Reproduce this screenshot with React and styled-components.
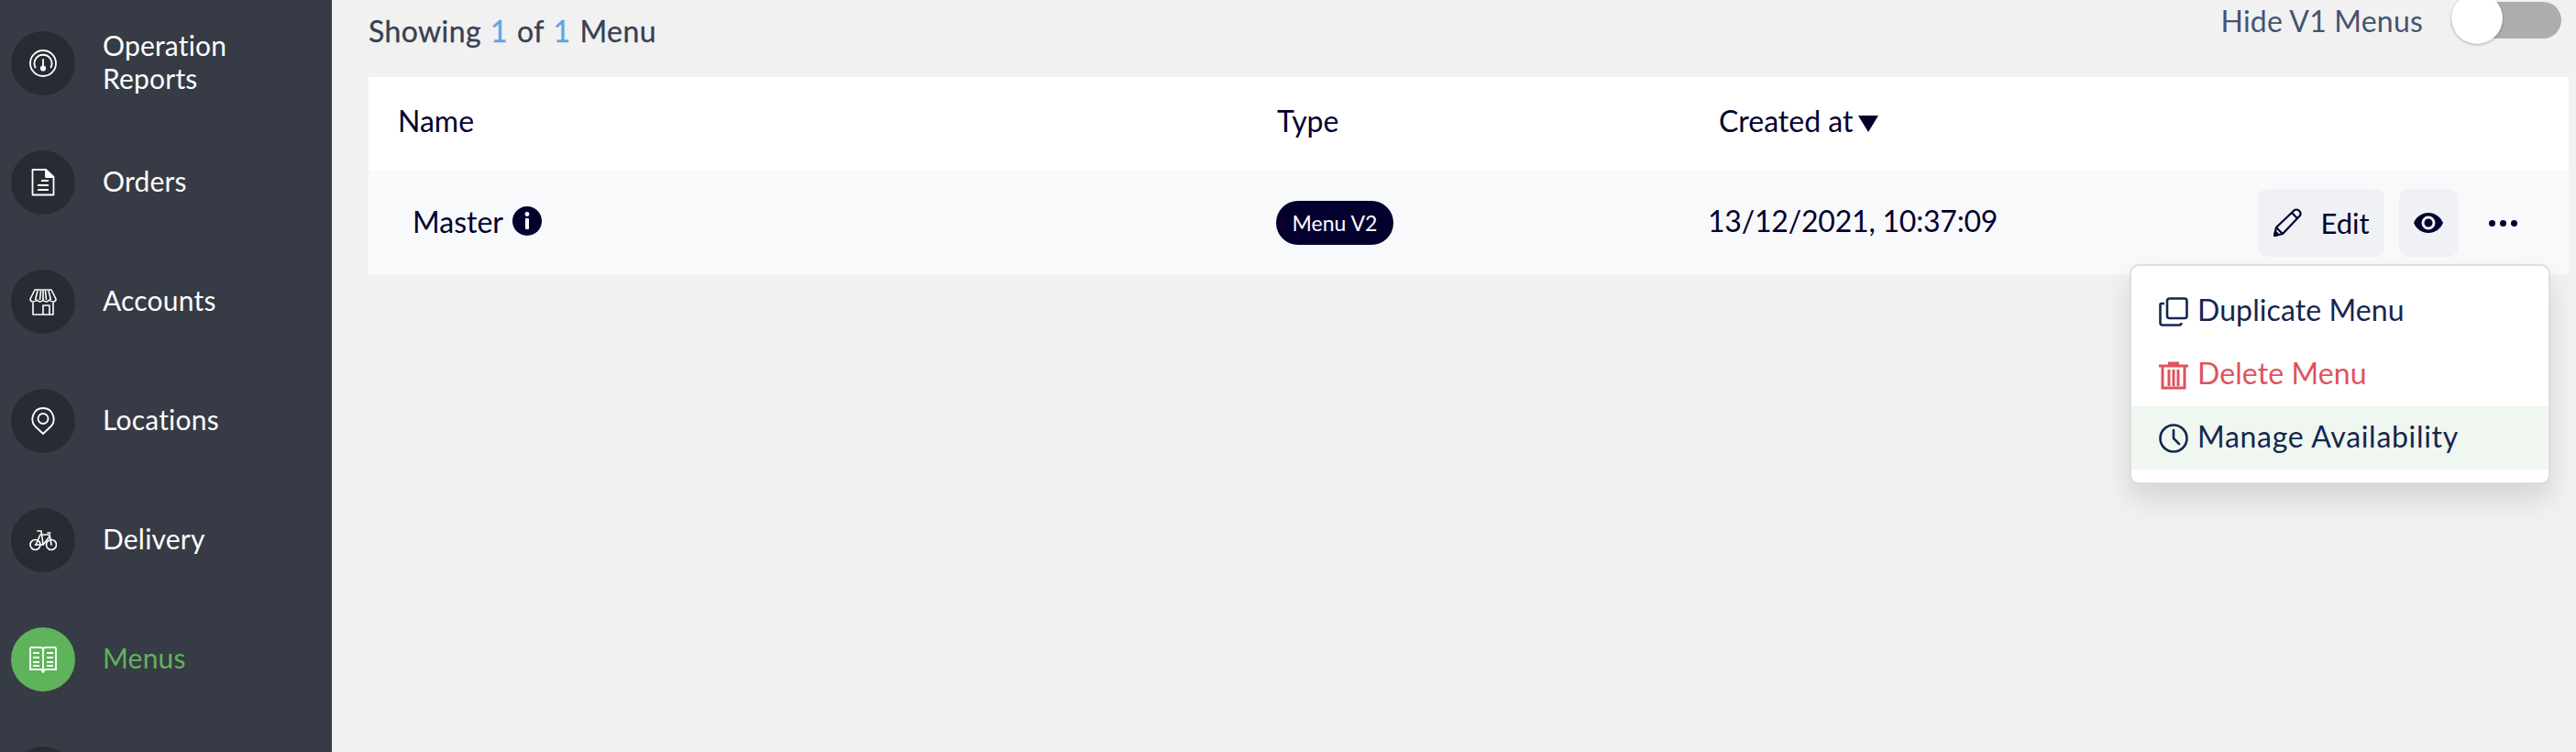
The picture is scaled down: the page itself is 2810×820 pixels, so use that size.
import React from "react";
import styled, { createGlobalStyle } from "styled-components";

const GlobalStyle = createGlobalStyle`
  html, body { margin: 0; padding: 0; height: 100%; }
  body { font-family: "Lato", "Noto Sans", sans-serif; background: #f1f1f1; overflow: hidden; }
`;

const GaugeIcon = () => (
  <svg width="30" height="30" viewBox="0 0 30 30" fill="none" stroke="#fff" strokeWidth="1.8" strokeLinecap="round">
    <circle cx="15" cy="15" r="14" />
    <path d="M6.5 19.5A9.5 9.5 0 1 1 23.5 19.5" />
    <path d="M15 11V18" />
    <circle cx="15" cy="20.5" r="2.2" fill="#fff" />
  </svg>
);

const FileIcon = () => (
  <svg width="30" height="30" viewBox="0 0 30 30" fill="none" stroke="#fff" strokeWidth="1.8" strokeLinejoin="round">
    <path d="M3.500 1H18L26.500 9V28.500H3.500Z" />
    <path d="M18 1V9H26.500" fill="#fff" />
    <path d="M13 13H21M9 18H21M9 23H21" />
  </svg>
);

const StoreIcon = () => (
  <svg width="30" height="30" viewBox="0 0 30 30" fill="none" stroke="#fff" strokeWidth="1.6" strokeLinejoin="round">
    <path d="M6 2H24L29 12Q29 15 26 15Q23 15 22 13Q20 15 18.500 15Q16 15 15 13Q14 15 11.500 15Q10 15 8 13Q7 15 4 15Q1 15 1 12Z" />
    <path d="M9 3L6.500 13M12.500 3L11.500 13M15 3V13M17.500 3L18.500 13M21 3L23.500 13" />
    <path d="M4 16V29H26V16" />
    <path d="M15 29V19H22V29" />
  </svg>
);

const PinIcon = () => (
  <svg width="30" height="30" viewBox="0 0 30 30" fill="none" stroke="#fff" strokeWidth="1.8" strokeLinejoin="round">
    <path d="M15 29L6 20.500C0.500 14 4 1 15 1C26 1 29.500 14 24 20.500Z" />
    <circle cx="15" cy="12.500" r="5.500" />
  </svg>
);

const BikeIcon = () => (
  <svg width="30" height="30" viewBox="0 0 30 30" fill="none" stroke="#fff" strokeWidth="1.6" strokeLinecap="round" strokeLinejoin="round">
    <circle cx="6.500" cy="20" r="5.500" />
    <circle cx="24" cy="20" r="5.500" />
    <path d="M7 20L12 9H22L24 20" />
    <path d="M6.500 20H15L22 11" />
    <path d="M9 5H13L15 20M20 7H23" />
  </svg>
);

const BookIcon = () => (
  <svg width="30" height="30" viewBox="0 0 30 30" fill="none" stroke="#fff" strokeWidth="1.8">
    <path d="M1 2H12Q15 2 15 5V28M29 2H18Q15 2 15 5" />
    <path d="M1 2V26H13L15 29L17 26H29V2" />
    <path d="M4 8H11M4 13H11M4 18H11M4 22H11M19 8H26M19 13H26M19 18H26M19 22H26" />
  </svg>
);

const InfoIcon = () => (
  <svg width="32" height="32" viewBox="0 0 32 32">
    <circle cx="16" cy="16" r="16" fill="#03002e" />
    <circle cx="16" cy="8.500" r="2.400" fill="#fff" />
    <rect x="14" y="13" width="4" height="12" rx="1" fill="#fff" />
  </svg>
);

const PencilIcon = () => (
  <svg width="32" height="32" viewBox="0 0 32 32" fill="none" stroke="#03002e" strokeWidth="2.200" strokeLinejoin="round">
    <path d="M2 30L4 21L24 2Q26 1 28 2L30 4Q31 6 30 8L11 28Z" />
    <path d="M21 5L27 11M4 21L11 28" />
    <path d="M2 30L3 25.500L6.500 29Z" fill="#03002e" />
  </svg>
);

const EyeIcon = () => (
  <svg width="32" height="32" viewBox="0 0 32 32">
    <path fillRule="evenodd" fill="#03002e" d="M0 16C3 9 9 5 16 5S29 9 32 16C29 23 23 27 16 27S3 23 0 16ZM16 8.500A7.500 7.500 0 1 0 16 23.500A7.500 7.500 0 1 0 16 8.500Z" />
    <circle cx="16" cy="16" r="4.500" fill="#03002e" />
  </svg>
);

const CopyIcon = ({ color }) => (
  <svg width="32" height="32" viewBox="0 0 32 32" fill="none" stroke={color} strokeWidth="2.600" strokeLinejoin="round">
    <rect x="9" y="1.500" width="21.500" height="21.500" rx="2.500" />
    <path d="M1.500 8V28Q1.500 30.500 4 30.500H22Q24.500 30.500 24.500 28" />
    <path d="M1.500 8Q1.500 7 3 7H6" />
  </svg>
);

const TrashIcon = ({ color }) => (
  <svg width="32" height="32" viewBox="0 0 32 32" fill="none" stroke={color} strokeWidth="3">
    <path d="M0 6H32" />
    <path d="M10 1.500H22V5H10Z" fill={color} stroke="none" />
    <path d="M4 6V30H28V6" />
    <path d="M11 10V28M16 10V28M21 10V28" />
  </svg>
);

const ClockIcon = ({ color }) => (
  <svg width="32" height="32" viewBox="0 0 32 32" fill="none" stroke={color} strokeWidth="2.600" strokeLinecap="round">
    <circle cx="16" cy="16" r="14.500" />
    <path d="M16 7V16L22 22" />
  </svg>
);

const Layout = styled.div`
  display: flex;
  width: 2810px;
  height: 820px;
  overflow: hidden;
`;

const Sidebar = styled.nav`
  width: 362px;
  flex-shrink: 0;
  height: 820px;
  padding-top: 4px;
  box-sizing: border-box;
  background: #363b45;
  overflow: hidden;
`;

const NavItem = styled.div`
  display: flex;
  align-items: center;
  height: 130px;
  padding-left: 12px;
  gap: 30px;
  flex-shrink: 0;
`;

const NavCircle = styled.div`
  width: 70px;
  height: 70px;
  flex-shrink: 0;
  border-radius: 50%;
  display: flex;
  align-items: center;
  justify-content: center;
  background: ${(p) => (p.$active ? "#5fb35a" : "#272b33")};
`;

const NavLabel = styled.span`
  font-size: 30px;
  line-height: 36px;
  width: 180px;
  padding-bottom: 4px;
  letter-spacing: 0.2px;
  color: ${(p) => (p.$active ? "#5fb35a" : "#ffffff")};
`;

const Main = styled.main`
  flex: 1;
  padding: 0 8px 0 40px;
  min-width: 0;
`;

const TopBar = styled.div`
  display: flex;
  align-items: flex-start;
  justify-content: space-between;
  height: 84px;
`;

const Summary = styled.div`
  font-size: 32px;
  line-height: 36px;
  margin-top: 16px;
  letter-spacing: 0.4px;
  word-spacing: 1.5px;
  color: #374151;
  -webkit-text-stroke: 0.3px #374151;
`;

const Count = styled.span`
  color: #5aa7e8;
  -webkit-text-stroke: 0.3px #5aa7e8;
`;

const ToggleWrap = styled.div`
  display: flex;
  align-items: flex-start;
  gap: 31px;
  padding-right: 8px;
`;

const ToggleLabel = styled.span`
  font-size: 32px;
  line-height: 36px;
  margin-top: 5px;
  letter-spacing: 0.2px;
  color: #445472;
`;

const ToggleTrack = styled.div`
  position: relative;
  width: 120px;
  height: 40px;
  margin-top: 2px;
  border-radius: 20px;
  background: #adadad;
`;

const ToggleKnob = styled.div`
  position: absolute;
  left: 0;
  top: -10px;
  width: 56px;
  height: 56px;
  border-radius: 50%;
  background: #fff;
  box-shadow: 0 1px 3px rgba(0, 0, 0, 0.3);
`;

const Columns = "990px 473px 1fr auto";

const HeaderRow = styled.div`
  display: grid;
  grid-template-columns: ${Columns};
  align-items: center;
  height: 102px;
  background: #fff;
`;

const HeaderCell = styled.div`
  font-size: 32px;
  color: #03002e;
  padding-left: ${(p) => p.$indent || 0}px;
  padding-bottom: 7px;
  display: flex;
  align-items: center;
  gap: 6px;
`;

const SortArrow = styled.span`
  width: 0;
  height: 0;
  margin-top: 6px;
  border-left: 11px solid transparent;
  border-right: 11px solid transparent;
  border-top: 18px solid #03002e;
`;

const BodyRow = styled.div`
  position: relative;
  display: grid;
  grid-template-columns: ${Columns};
  align-items: center;
  height: 114px;
  background: #f8f9fb;
`;

const NameCell = styled.div`
  display: flex;
  align-items: center;
  gap: 10px;
  padding-left: 48px;
  padding-bottom: 4px;
  font-size: 32px;
  color: #03002e;
`;

const TypeCell = styled.div`
  display: flex;
`;

const Badge = styled.span`
  display: flex;
  align-items: center;
  justify-content: center;
  width: 128px;
  height: 48px;
  border-radius: 24px;
  background: #03002e;
  color: #fff;
  font-size: 23px;
`;

const DateCell = styled.div`
  font-size: 32px;
  margin-left: -2px;
  padding-bottom: 6px;
  letter-spacing: -0.2px;
  color: #03002e;
`;

const Actions = styled.div`
  display: flex;
  align-items: center;
  gap: 16px;
  padding-right: 56px;
`;

const ActionButton = styled.button`
  display: flex;
  align-items: center;
  justify-content: center;
  gap: 20px;
  width: ${(p) => p.$width}px;
  height: 74px;
  padding: 0;
  border: none;
  border-radius: 10px;
  background: #f0f1f5;
  color: #03002e;
  font-family: inherit;
  font-size: 31px;
`;

const DotsButton = styled.div`
  display: flex;
  gap: 5px;
  margin-left: 18px;
`;

const Dot = styled.span`
  width: 7px;
  height: 7px;
  border-radius: 50%;
  background: #03002e;
`;

const Dropdown = styled.div`
  position: absolute;
  top: 102px;
  right: 20px;
  width: 459px;
  height: 240px;
  box-sizing: border-box;
  padding: 15px 0;
  background: #fff;
  border: 2px solid #dedede;
  border-radius: 10px;
  box-shadow: 0 16px 30px rgba(0, 0, 0, 0.12);
`;

const DropdownItem = styled.div`
  display: flex;
  align-items: center;
  gap: 10px;
  height: 69px;
  padding-left: 30px;
  font-size: 32px;
  color: ${(p) => (p.$danger ? "#e0525c" : "#14274e")};
  background: ${(p) => (p.$hover ? "#f0f6f0" : "transparent")};
`;

const DropdownText = styled.span`
  padding-bottom: 4px;
  letter-spacing: ${(p) => p.$spacing || 0.1}px;
`;

const navItems = [
  { label: "Operation Reports", Icon: GaugeIcon },
  { label: "Orders", Icon: FileIcon },
  { label: "Accounts", Icon: StoreIcon },
  { label: "Locations", Icon: PinIcon },
  { label: "Delivery", Icon: BikeIcon },
  { label: "Menus", Icon: BookIcon, active: true },
  { label: "", Icon: () => null },
];

const App = () => {
  return (
    <Layout>
      <GlobalStyle />
      <Sidebar>
        {navItems.map(({ label, Icon, active }, i) => (
          <NavItem key={i}>
            <NavCircle $active={active}>
              <Icon />
            </NavCircle>
            <NavLabel $active={active}>{label}</NavLabel>
          </NavItem>
        ))}
      </Sidebar>
      <Main>
        <TopBar>
          <Summary>
            Showing <Count>1</Count> of <Count>1</Count> Menu
          </Summary>
          <ToggleWrap>
            <ToggleLabel>Hide V1 Menus</ToggleLabel>
            <ToggleTrack>
              <ToggleKnob />
            </ToggleTrack>
          </ToggleWrap>
        </TopBar>
        <HeaderRow>
          <HeaderCell $indent={32}>Name</HeaderCell>
          <HeaderCell $indent={1}>Type</HeaderCell>
          <HeaderCell $indent={10}>
            Created at
            <SortArrow />
          </HeaderCell>
          <div />
        </HeaderRow>
        <BodyRow>
          <NameCell>
            Master
            <InfoIcon />
          </NameCell>
          <TypeCell>
            <Badge>Menu V2</Badge>
          </TypeCell>
          <DateCell>13/12/2021, 10:37:09</DateCell>
          <Actions>
            <ActionButton $width={138}>
              <PencilIcon />
              Edit
            </ActionButton>
            <ActionButton $width={64}>
              <EyeIcon />
            </ActionButton>
            <DotsButton>
              <Dot />
              <Dot />
              <Dot />
            </DotsButton>
          </Actions>
          <Dropdown>
            <DropdownItem>
              <CopyIcon color="#14274e" />
              <DropdownText>Duplicate Menu</DropdownText>
            </DropdownItem>
            <DropdownItem $danger>
              <TrashIcon color="#e0525c" />
              <DropdownText>Delete Menu</DropdownText>
            </DropdownItem>
            <DropdownItem $hover>
              <ClockIcon color="#14274e" />
              <DropdownText $spacing={0.7}>Manage Availability</DropdownText>
            </DropdownItem>
          </Dropdown>
        </BodyRow>
      </Main>
    </Layout>
  );
};

export default App;
